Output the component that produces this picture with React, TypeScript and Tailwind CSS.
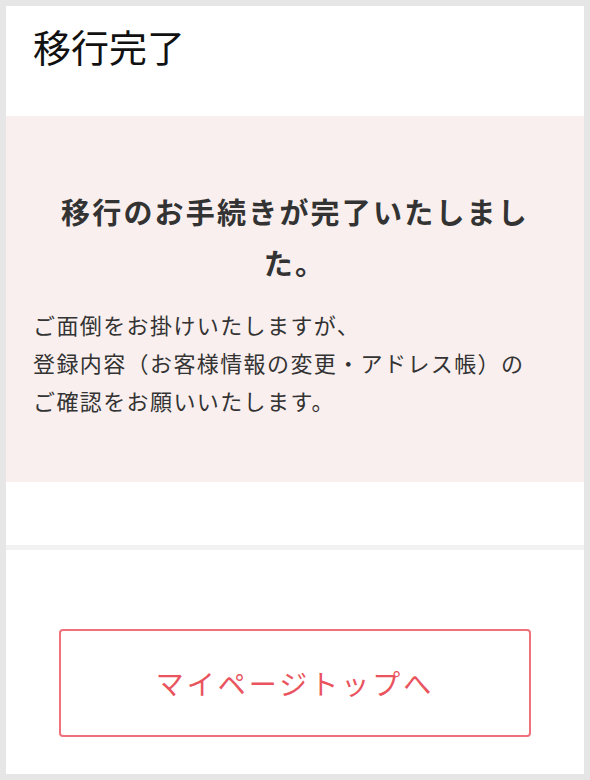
import React from "react";

export default function App() {
  return (
    <div
      className="w-[590px] h-[780px] bg-[#e6e6e6] p-[6px] overflow-hidden"
      style={{ fontFamily: '"Noto Sans CJK JP", "Noto Sans", sans-serif' }}
    >
      <div className="flex h-full flex-col bg-white">
        <header className="h-[110px] pl-[27px] pt-[13px]">
          <h1 className="text-[38px] leading-[54px] font-normal text-[#111]">移行完了</h1>
        </header>

        <section className="bg-[#f9efee] px-[27px] pt-[70px] pb-[63px]">
          <h2 className="mx-[20px] text-center text-[29px] leading-[51px] font-bold tracking-[2.2px] text-[#333]">
            移行のお手続きが完了いたしました。
          </h2>
          <p className="mt-[17px] text-[22px] leading-[38px] tracking-[1.4px] text-[#333]">
            ご面倒をお掛けいたしますが、
            <br />
            登録内容（お客様情報の変更・アドレス帳）の
            <br />
            ご確認をお願いいたします。
          </p>
        </section>

        <div className="h-[63px]" />
        <div className="h-[5px] bg-[#f2f2f2]" />

        <div className="flex-1 px-[53px] pt-[79px]">
          <button className="flex h-[108px] w-full items-center justify-center rounded-[4px] border-2 border-[#f07179] bg-white text-[28px] tracking-[3px] text-[#e9545e]">
            マイページトップへ
          </button>
        </div>
      </div>
    </div>
  );
}
